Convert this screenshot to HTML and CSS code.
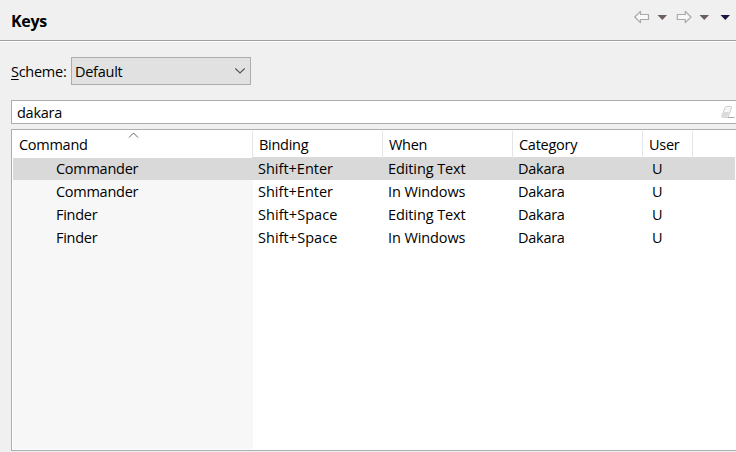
FILE: index.html
```
<!DOCTYPE html>
<html lang="en">
<head>
<meta charset="utf-8">
<title>Keys</title>
<link rel="stylesheet" href="styles.css">
</head>
<body>
<header class="title-bar">
  <h1>Keys</h1>
  <svg class="nav" width="104" height="20" viewBox="0 0 104 20">
    <g fill="#f8f8f8" stroke="#aaa8a8" stroke-width="1.2" stroke-linejoin="round">
      <path d="M2.8 9 8.5 3.3V6.5H16.5V11.5H8.5V14.7Z"/>
      <path d="M59 9 53.3 3.3V6.5H45.3V11.5H53.3V14.7Z"/>
    </g>
    <path fill="#6b5e5b" d="M25.5 7H35L30.3 12ZM67.5 7H77L72.3 12Z"/>
    <path fill="#16163f" d="M88.5 7H98L93.3 12Z"/>
  </svg>
</header>
<main class="content">
  <div class="scheme">
    <label><u>S</u>cheme:</label>
    <div class="select"><span>Default</span>
      <svg width="12" height="8" viewBox="0 0 12 8"><path d="M1.3 1.5 6 6 10.7 1.5" fill="none" stroke="#555" stroke-width="1.1"/></svg>
    </div>
  </div>
  <div class="filter"><span>dakara</span>
    <svg width="16" height="16" viewBox="0 0 16 16"><path d="M6.5 2.5H10.5Q12 2.5 11.5 4L8 13.3H2.5Q1.3 13.3 1.8 12L5 3.8Q5.5 2.5 6.5 2.5Z" fill="#f6f6f6" stroke="#c6c6c6" stroke-width=".9"/><path d="M3.8 8H9L7.2 12.8H2.3Z" fill="#dadcd8"/><path d="M8 13.5H14.5" stroke="#aaa"/></svg>
  </div>
  <div class="table">
    <div class="row head"><div class="command">Command<svg class="sort" width="11" height="7" viewBox="0 0 11 7"><path d="M1 5.5 5.5 1 10 5.5" fill="none" stroke="#666"/></svg></div><div>Binding</div><div>When</div><div>Category</div><div>User</div><div></div></div>
    <div class="row selected"><div class="command">Commander</div><div class="enter">Shift+Enter</div><div class="context">Editing Text</div><div>Dakara</div><div>U</div></div>
    <div class="row"><div class="command">Commander</div><div class="enter">Shift+Enter</div><div class="context">In Windows</div><div>Dakara</div><div>U</div></div>
    <div class="row"><div class="command">Finder</div><div class="space">Shift+Space</div><div class="context">Editing Text</div><div>Dakara</div><div>U</div></div>
    <div class="row"><div class="command">Finder</div><div class="space">Shift+Space</div><div class="context">In Windows</div><div>Dakara</div><div>U</div></div>
    <div class="row rest"><div class="command"></div></div>
  </div>
</main>
</body>
</html>
```
FILE: styles.css
```
* { box-sizing: border-box; }
body {
  margin: 0;
  width: 736px;
  height: 452px;
  overflow: hidden;
  background: #f0f0f0;
  color: #000;
  font: 14.5px/23px "Open Sans", "Noto Sans", sans-serif;
  letter-spacing: -0.27px;
  white-space: nowrap;
}
svg { display: block; }
.title-bar {
  display: flex;
  justify-content: space-between;
  height: 42px;
  padding: 8px 0 0 11px;
  border-bottom: 1px solid #fff;
  box-shadow: inset 0 -1px #a0a0a0;
}
h1 { margin: 2px 0 0; font-size: 16px; line-height: 23px; letter-spacing: -0.35px; }
.content { padding: 15px 0 0 11px; }
.scheme { display: flex; height: 28px; }
.scheme label { width: 60px; line-height: 29px; }
.scheme u { text-underline-offset: 2px; }
.select {
  display: flex;
  align-items: center;
  justify-content: space-between;
  width: 180px;
  padding: 0 4px 0 3px;
  border: 1px solid #adadad;
  background: #e1e1e1;
}
.filter {
  display: flex;
  justify-content: space-between;
  height: 24px;
  margin-top: 15px;
  padding: 0 0 0 5px;
  border: 1px solid #abadb3;
  border-right: 0;
  background: #fff;
}
.filter svg { margin-top: 3px; }
.table {
  height: 322px;
  margin-top: 5px;
  padding: 1px;
  border: 1px solid #abadb3;
  border-right: 0;
  background: #fff;
}
.row {
  display: grid;
  grid-template-columns: 240px 130px 130px 130px 50px 1fr;
  height: 23px;
}
.row > div { padding-left: 5px; }
.row > div:nth-child(5) { padding-left: 9px; }
.row > .command { padding-left: 43px; background: #f7f7f7; }
.row > .enter { letter-spacing: 0; }
.row > .space { letter-spacing: 0.05px; }
.row > .context { letter-spacing: -0.1px; }
.row.head { height: 26px; line-height: 27px; }
.row.head > div { padding-left: 6px; border-right: 1px solid #e5e5e5; }
.row.head > .command { position: relative; background: #fff; }
.row.head > div:last-child { border: 0; }
.sort { position: absolute; left: 115px; top: 1px; }
.selected, .row.selected > .command { background: #d9d9d9; }
.row.rest { height: 200px; }
```
